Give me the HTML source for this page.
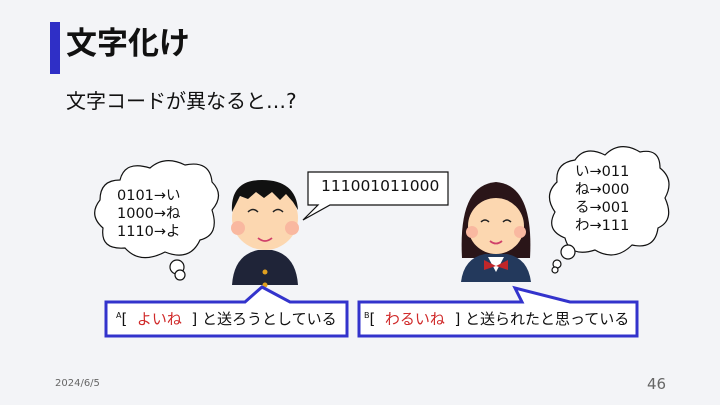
<!DOCTYPE html>
<html><head><meta charset="utf-8"><style>
body{margin:0;width:720px;height:405px;background:#f3f4f7;position:relative;overflow:hidden;font-family:"DejaVu Sans","Noto Sans CJK JP",sans-serif;color:#111}
.a{position:absolute;white-space:nowrap}
</style></head><body>
<div class="a" style="left:50px;top:22px;width:10px;height:52px;background:#2f2fc6"></div>
<div class="a" style="left:66px;top:24px;font-size:31px;font-weight:bold;line-height:40px">文字化け</div>
<div class="a" style="left:66px;top:88px;font-size:20px;line-height:26px">文字コードが異なると…?</div>
<svg class="a" style="left:0;top:0" width="720" height="405">
<g fill="#fff" stroke="#111" stroke-width="1.2">
<path d="M120 180 Q125 160 150 168 Q165 155 185 165 Q210 160 212 182 Q225 195 212 210 Q220 235 200 240 Q190 262 165 252 Q140 265 125 248 Q100 250 103 228 Q88 215 100 200 Q100 180 120 180Z"/>
<circle cx="177" cy="267" r="7"/><circle cx="180" cy="275" r="5"/>
<path d="M575 160 Q585 145 605 155 Q620 140 640 152 Q660 148 660 168 Q675 180 665 198 Q675 220 658 228 Q655 250 632 245 Q615 262 595 250 Q570 258 565 238 Q545 230 555 212 Q543 195 557 182 Q555 163 575 160Z"/>
<circle cx="568" cy="252" r="7"/><circle cx="557" cy="264" r="4"/><circle cx="555" cy="270" r="3"/>
</g>
<path d="M308 172 H448 V205 H330 L303 220 L318 205 H308 Z" fill="#fff" stroke="#111" stroke-width="1.2"/>
<path d="M232 285 Q234 255 258 250 H272 Q296 255 298 285Z" fill="#1f2438"/>
<circle cx="265" cy="272" r="2.5" fill="#e0a020"/><circle cx="265" cy="285" r="2.5" fill="#e0a020"/>
<ellipse cx="265" cy="218" rx="33" ry="32" fill="#fcd7b0"/>
<circle cx="238" cy="228" r="7" fill="#f9b8a0"/><circle cx="292" cy="228" r="7" fill="#f9b8a0"/>
<path d="M232 212 Q230 180 262 180 Q296 180 298 210 L293 202 L286 194 L280 200 L272 192 L264 198 L256 192 L248 199 L240 196 Z" fill="#111"/>
<path d="M248 212 q5 -5 10 0 M273 212 q5 -5 10 0" fill="none" stroke="#222" stroke-width="1.5"/>
<path d="M258 238 q7 6 14 0" fill="none" stroke="#d0406a" stroke-width="1.8"/>
<path d="M462 258 Q458 185 496 182 Q534 185 530 258Z" fill="#2a1518"/>
<path d="M461 282 Q464 258 485 254 H507 Q528 258 531 282Z" fill="#23395c"/>
<path d="M488 257 L496 272 L504 257Z" fill="#fff"/>
<path d="M484 260 L496 266 L508 260 L508 270 L496 266 L484 270Z" fill="#c0262a"/>
<ellipse cx="496" cy="226" rx="28" ry="28" fill="#fcd7b0"/>
<circle cx="472" cy="232" r="6" fill="#f9b8a0"/><circle cx="520" cy="232" r="6" fill="#f9b8a0"/>
<path d="M468 215 Q472 190 496 194 Q520 190 524 215 L516 200 Q496 196 476 200Z" fill="#2a1518"/>
<path d="M481 222 q4 -4 8 0 M503 222 q4 -4 8 0" fill="none" stroke="#222" stroke-width="1.5"/>
<path d="M490 241 q6 5 12 0" fill="none" stroke="#d0406a" stroke-width="1.8"/>
<path d="M106 302 H245 L262 287 L290 302 H347 V336 H106 Z" fill="#fff" stroke="#3333cc" stroke-width="3"/>
<path d="M359 302 H522 L515 288 L570 302 H637 V336 H359 Z" fill="#fff" stroke="#3333cc" stroke-width="3"/>
</svg>
<div class="a" style="left:117px;top:187px;font-size:14.5px;line-height:18px">0101→い<br>1000→ね<br>1110→よ</div>
<div class="a" style="left:575px;top:163px;font-size:14.5px;line-height:18px">い→011<br>ね→000<br>る→001<br>わ→111</div>
<div class="a" style="left:321px;top:177px;font-size:15.5px">111001011000</div>
<div class="a" style="left:116px;top:308px;font-size:15px"><sup style="font-size:8px">A</sup>[ <span style="color:#d02a2a">&nbsp;よいね&nbsp;</span> ] と送ろうとしている</div>
<div class="a" style="left:364px;top:308px;font-size:15px"><sup style="font-size:8px">B</sup>[ <span style="color:#d02a2a">&nbsp;わるいね&nbsp;</span> ] と送られたと思っている</div>
<div class="a" style="left:55px;top:378px;font-size:10px;color:#666">2024/6/5</div>
<div class="a" style="left:647px;top:375px;font-size:15px;color:#666">46</div>
</body></html>
